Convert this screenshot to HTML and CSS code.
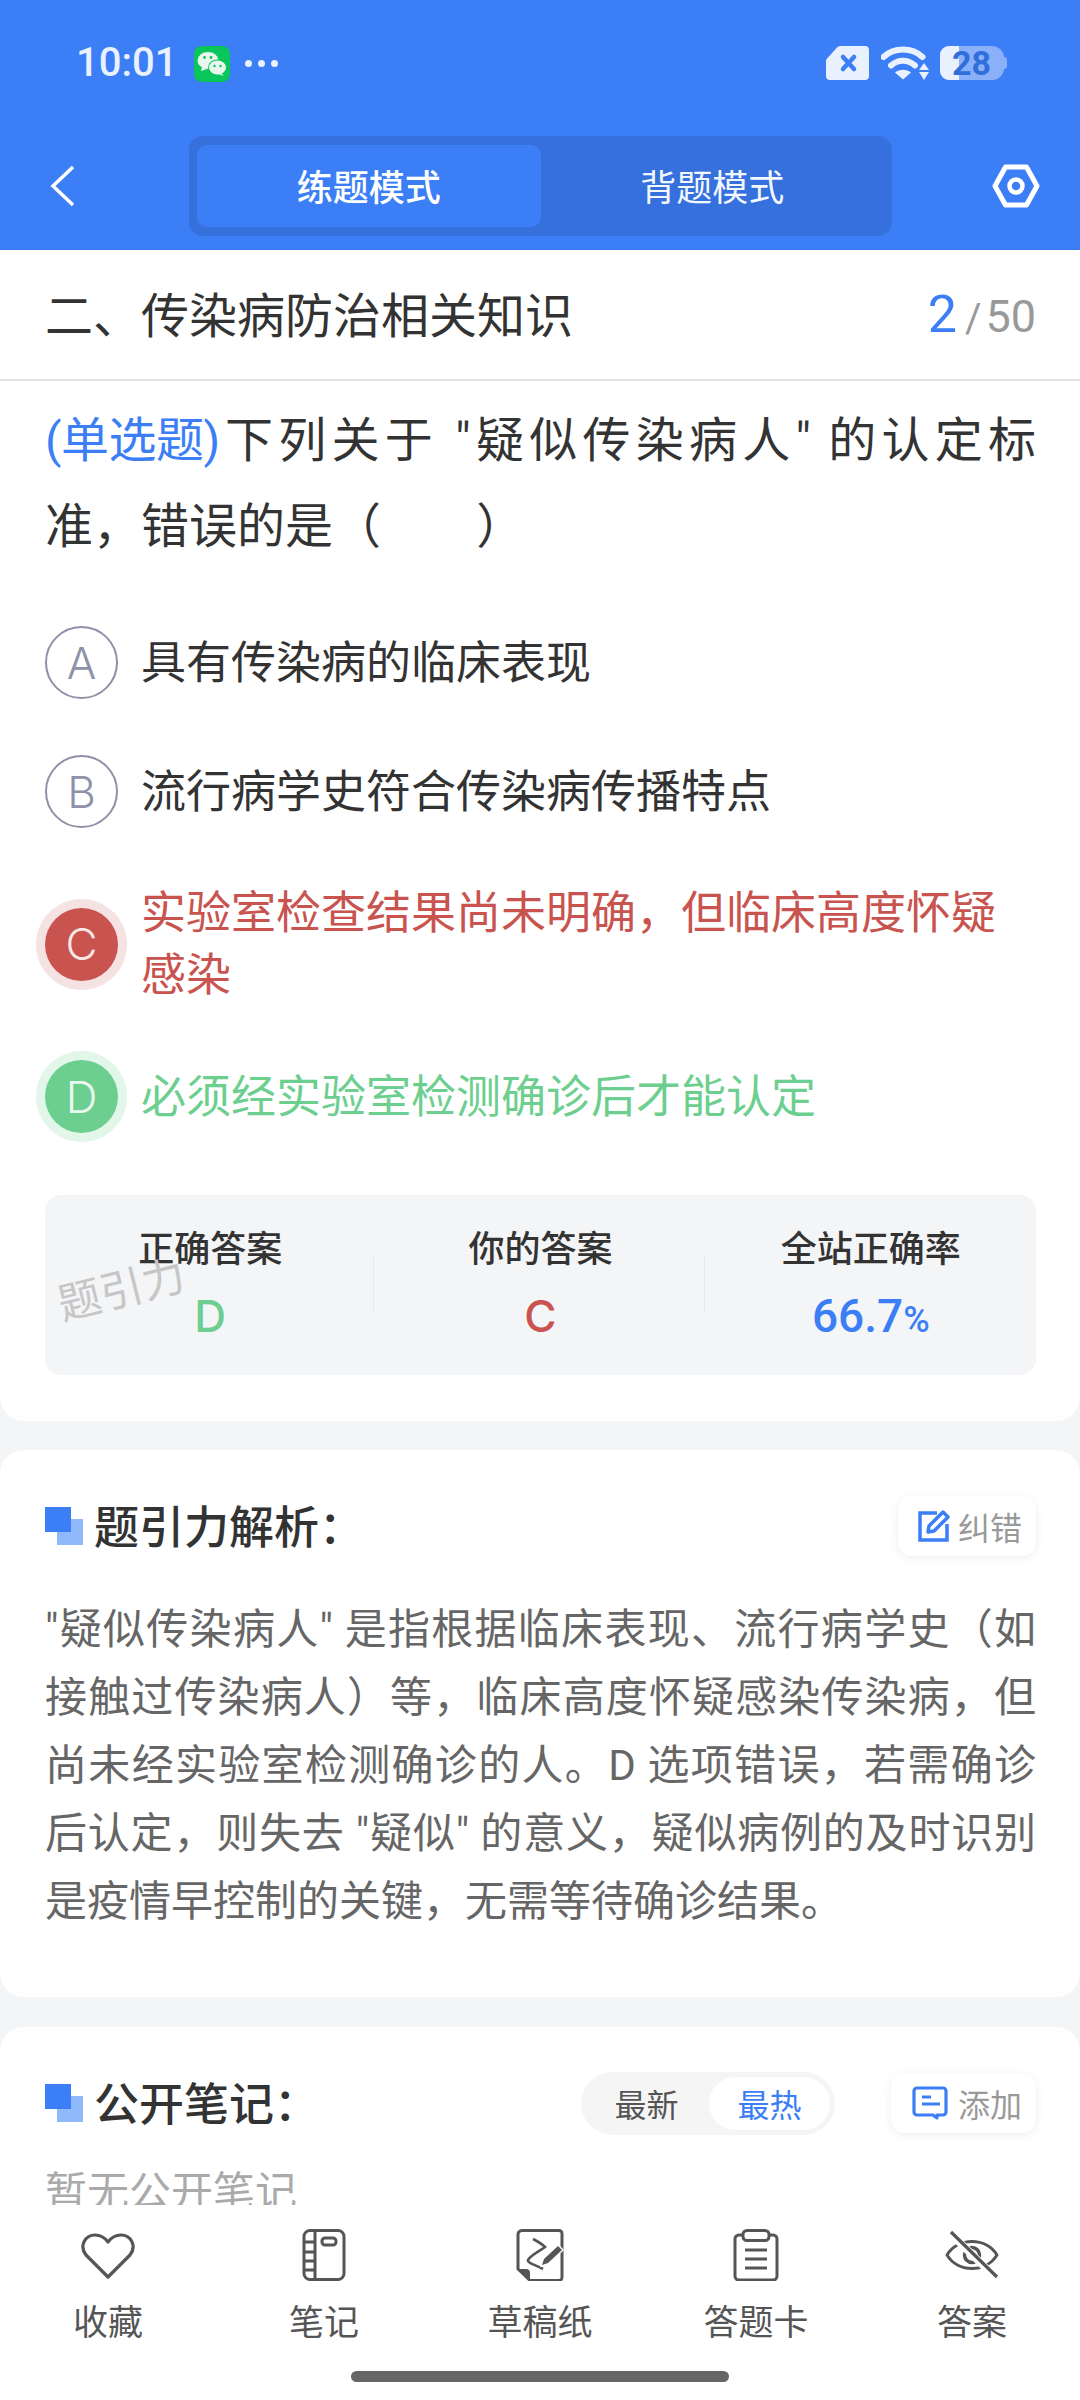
FILE: index.html
```html
<!DOCTYPE html>
<html lang="zh">
<head>
<meta charset="utf-8">
<title>练题模式</title>
<link rel="stylesheet" href="styles.css">
</head>
<body>
<div class="page">
  <header class="top">
    <div class="status">
      <span class="time">10:01</span>
      <svg class="wechat" viewBox="0 0 36 36"><rect width="36" height="36" rx="8" fill="#0ac65a"/><ellipse cx="14" cy="14.500" rx="10.500" ry="8.500" fill="#e9f7ee"/><path d="M8 21l-1 4 6-2z" fill="#e9f7ee"/><ellipse cx="23.500" cy="21.500" rx="9.500" ry="8" fill="#0ac65a"/><ellipse cx="23.500" cy="21.500" rx="8.500" ry="7" fill="#e9f7ee"/><path d="M27 27l3 3-6-2z" fill="#e9f7ee"/><circle cx="10.500" cy="11.500" r="1.400" fill="#0ac65a"/><circle cx="17" cy="11.500" r="1.400" fill="#0ac65a"/><circle cx="20.500" cy="20" r="1.200" fill="#0ac65a"/><circle cx="26.500" cy="20" r="1.200" fill="#0ac65a"/></svg>
      <span class="dots"><i></i><i></i><i></i></span>
      <span class="status-gap"></span>
      <svg class="sim" viewBox="0 0 43 34"><path d="M14 0h25a4 4 0 0 1 4 4v26a4 4 0 0 1-4 4H4a4 4 0 0 1-4-4V15a4 4 0 0 1 1.500-3L11 1.500A4 4 0 0 1 14 0z" fill="#e9f0fe"/><path d="M17 11l11 12M28 11L17 23" stroke="#3b7ef6" stroke-width="4.500" stroke-linecap="round"/></svg>
      <svg class="wifi" viewBox="0 0 48 34"><path d="M2.500 11C13 1 31 1 41.500 11" fill="none" stroke="#e9f0fe" stroke-width="6" stroke-linecap="round"/><path d="M10 19.500C17 13 27 13 34 19.500" fill="none" stroke="#e9f0fe" stroke-width="6" stroke-linecap="round"/><path d="M14 26.500c4.500-3.800 11.500-3.800 16 0l-8 7z" fill="#e9f0fe"/><path d="M43 17l5 7H38zM43 34l-5-8h10z" fill="#e9f0fe"/></svg>
      <span class="battery"><span class="battery-fill"></span><span class="battery-num">28</span><span class="battery-nub"></span></span>
    </div>
    <nav class="modes">
      <div class="back"><svg class="back-icon" viewBox="0 0 26 42"><path d="M23 2L3 21l20 19" fill="none" stroke="#fff" stroke-width="3.500"/></svg></div>
      <div class="tabs">
        <div class="tab tab-on">练题模式</div>
        <div class="tab">背题模式</div>
      </div>
      <div class="setting"><svg class="hex" viewBox="0 0 48 44"><path d="M13.500 3h21L45 22 34.500 41h-21L3 22z" fill="none" stroke="#fff" stroke-width="5" stroke-linejoin="round"/><circle cx="24" cy="22" r="6.500" fill="none" stroke="#fff" stroke-width="4.500"/></svg></div>
    </nav>
  </header>

  <main class="scroll">
    <section class="card card-first">
      <div class="chapter">
        <h1 class="chapter-title">二、传染病防治相关知识</h1>
        <div class="count"><span class="count-now">2</span><span class="count-sep">/</span><span class="count-all">50</span></div>
      </div>
      <p class="question"><span class="qtype">(单选题)</span>下列关于 "疑似传染病人" 的认定标准，错误的是（&nbsp;&nbsp;&nbsp;&nbsp;&nbsp;&nbsp;&nbsp;&nbsp;）</p>
      <div class="options">
        <div class="option"><span class="badge">A</span><span class="opt-text">具有传染病的临床表现</span></div>
        <div class="option"><span class="badge">B</span><span class="opt-text">流行病学史符合传染病传播特点</span></div>
        <div class="option wrong"><span class="badge">C</span><span class="opt-text">实验室检查结果尚未明确，但临床高度怀疑感染</span></div>
        <div class="option right"><span class="badge">D</span><span class="opt-text">必须经实验室检测确诊后才能认定</span></div>
      </div>
      <div class="stats">
        <div class="stat"><div class="stat-name">正确答案</div><div class="stat-val val-right">D</div></div>
        <div class="stat"><div class="stat-name">你的答案</div><div class="stat-val val-wrong">C</div></div>
        <div class="stat"><div class="stat-name">全站正确率</div><div class="stat-val val-rate">66.7<small>%</small></div></div>
        <div class="mark">题引力</div>
      </div>
    </section>

    <section class="card card-analysis">
      <div class="card-head">
        <h2 class="card-title"><span class="squares"></span><span class="title-text">题引力解析：</span></h2>
        <div class="mini-btn"><svg class="mini-icon" viewBox="0 0 34 34"><path d="M20 4H3v27h27V15" fill="none" stroke="#3b7ef6" stroke-width="3.500"/><path d="M12 17L26 3l5 5-14 14-6 1z" fill="none" stroke="#3b7ef6" stroke-width="3.500" stroke-linejoin="round"/></svg><span>纠错</span></div>
      </div>
      <p class="analysis">"疑似传染病人" 是指根据临床表现、流行病学史（如接触过传染病人）等，临床高度怀疑感染传染病，但尚未经实验室检测确诊的人。D 选项错误，若需确诊后认定，则失去 "疑似" 的意义，疑似病例的及时识别是疫情早控制的关键，无需等待确诊结果。</p>
    </section>

    <section class="card card-notes">
      <div class="card-head">
        <h2 class="card-title"><span class="squares"></span><span class="title-text">公开笔记：</span></h2>
        <div class="head-right">
          <div class="segment"><span class="seg">最新</span><span class="seg seg-on">最热</span></div>
          <div class="mini-btn mini-btn-wide"><svg class="mini-icon" viewBox="0 0 36 34"><path d="M5 2h26a3 3 0 0 1 3 3v21a3 3 0 0 1-3 3h-6v3l-4-3H5a3 3 0 0 1-3-3V5a3 3 0 0 1 3-3z" fill="none" stroke="#3b7ef6" stroke-width="3.200" stroke-linejoin="round"/><path d="M10 11h9M10 18h18" stroke="#3b7ef6" stroke-width="3.200"/></svg><span>添加</span></div>
        </div>
      </div>
      <p class="empty">暂无公开笔记</p>
    </section>
  </main>

  <footer class="bottom">
    <div class="tools">
      <div class="tool"><svg class="tool-icon" viewBox="0 0 56 52"><path d="M28 48L6 26C-1 17 5 6 15 6c5.500 0 10 3 13 7 3-4 7.500-7 13-7 10 0 16 11 9 20z" fill="none" stroke="#555" stroke-width="3.200" stroke-linejoin="round"/></svg><span>收藏</span></div>
      <div class="tool"><svg class="tool-icon" viewBox="0 0 56 52"><rect x="8" y="1.500" width="40" height="49" rx="6" fill="none" stroke="#555" stroke-width="3"/><path d="M19 2v48M8 13h11M8 23h11M8 32h11M8 41h11" stroke="#555" stroke-width="3"/><rect x="26" y="9" width="14" height="7" rx="3" fill="none" stroke="#555" stroke-width="3"/></svg><span>笔记</span></div>
      <div class="tool"><svg class="tool-icon" viewBox="0 0 56 52"><path d="M10 1.500h37a3 3 0 0 1 3 3v44a3 3 0 0 1-3 3H18L6 40V5.500a4 4 0 0 1 4-4z" fill="none" stroke="#555" stroke-width="3" stroke-linejoin="round"/><path d="M6 40h8a4 4 0 0 1 4 4v7z" fill="#555"/><path d="M21 10c4 2 9 5 12 8-5 4-14 8-17 13-1 3 8 5 15 9" fill="none" stroke="#555" stroke-width="2.600"/><path d="M46 15l6 6-16 15-8 2 2-8z" fill="#fff"/><path d="M46 17l4 4-14 13-6 2 2-6z" fill="#555"/></svg><span>草稿纸</span></div>
      <div class="tool"><svg class="tool-icon" viewBox="0 0 56 52"><path d="M14 6h-3a4 4 0 0 0-4 4v37a4 4 0 0 0 4 4h34a4 4 0 0 0 4-4V10a4 4 0 0 0-4-4h-3" fill="none" stroke="#555" stroke-width="3"/><rect x="15" y="1.500" width="26" height="10" rx="4" fill="none" stroke="#555" stroke-width="3"/><path d="M17 21h22M17 30h22M17 39h22" stroke="#555" stroke-width="3"/></svg><span>答题卡</span></div>
      <div class="tool"><svg class="tool-icon" viewBox="0 0 56 52"><path d="M3 26C14 8 42 8 53 26 42 44 14 44 3 26z" fill="none" stroke="#555" stroke-width="3" stroke-linejoin="round"/><circle cx="28" cy="26" r="7.500" fill="none" stroke="#555" stroke-width="3.500"/><path d="M5 3l46 45" stroke="#fff" stroke-width="8"/><path d="M7 3l46 45" stroke="#555" stroke-width="3.200"/></svg><span>答案</span></div>
    </div>
    <div class="home-bar"></div>
  </footer>
</div>
</body>
</html>
```

FILE: styles.css
```css
* { box-sizing: border-box; }
html, body { margin: 0; padding: 0; }
body {
  width: 1080px;
  height: 2400px;
  overflow: hidden;
  background: #f4f5f7;
  font-family: Roboto, "Noto Sans CJK SC", sans-serif;
  color: #333;
}
h1, h2, p { margin: 0; }
.page { height: 2400px; display: flex; flex-direction: column; }

.top { background: #3b7ef6; height: 250px; flex: none; }
.status { height: 136px; padding: 46px 76px 0 76px; display: flex; align-items: flex-start; }
.time { font-size: 40px; line-height: 34px; font-weight: 500; color: #e9f0fe; width: 118px; }
.wechat { width: 36px; height: 36px; }
.dots { display: flex; gap: 6px; margin: 14px 0 0 15px; }
.dots i { width: 7px; height: 7px; border-radius: 50%; background: #e9f0fe; }
.status-gap { flex: 1; }
.sim { width: 43px; height: 34px; }
.wifi { width: 48px; height: 34px; margin-left: 12px; }
.battery { position: relative; width: 64px; height: 34px; margin-left: 11px; background: #8bb0fa; border-radius: 9px 12px 12px 9px; }
.battery-fill { position: absolute; left: 0; top: 0; bottom: 0; width: 19px; background: #e9f0fe; border-radius: 9px 0 0 9px; }
.battery-num { position: absolute; left: 12px; top: 0; font-size: 34px; line-height: 34px; font-weight: 700; color: #2f6edb; }
.battery-nub { position: absolute; right: -3px; top: 11px; width: 4px; height: 12px; background: #8bb0fa; border-radius: 0 3px 3px 0; }

.modes { display: flex; align-items: center; height: 100px; }
.back { width: 189px; padding-left: 50px; display: flex; }
.back-icon { width: 26px; height: 42px; }
.tabs { width: 703px; height: 100px; padding: 9px 8px; display: flex; background: #3570dc; border-radius: 14px; }
.tab { flex: 1; display: flex; align-items: center; justify-content: center; padding-bottom: 3px; font-size: 36px; color: #f3f7ff; border-radius: 10px; }
.tab-on { background: #3b7ef6; color: #fff; font-weight: 500; }
.setting { flex: 1; display: flex; justify-content: flex-end; padding-right: 40px; }
.hex { width: 48px; height: 44px; }

.scroll { flex: 1; min-height: 0; overflow: hidden; }
.card { background: #fff; border-radius: 24px; }
.card-first { border-radius: 0 0 24px 24px; height: 1171px; }
.chapter { height: 131px; display: flex; align-items: center; justify-content: space-between; padding: 0 44px 0 45px; border-bottom: 2px solid #e2e2e2; }
.chapter-title { font-size: 48px; font-weight: 400; color: #333; padding-bottom: 6px; }
.count { display: flex; align-items: baseline; }
.count-now { font-size: 52px; color: #3b7ef6; }
.count-sep { font-size: 40px; color: #999; margin: 0 4px 0 8px; }
.count-all { font-size: 45px; color: #999; }

.question { padding: 17px 44px 0 45px; font-size: 48px; line-height: 86px; text-align: justify; color: #333; }
.qtype { display: inline-block; color: #3b7ef6; letter-spacing: -0.5px; }
.options { margin-top: 55px; padding: 0 44px 0 45px; display: flex; flex-direction: column; gap: 54px; }
.option { min-height: 75px; display: flex; align-items: center; gap: 23px; font-size: 45px; line-height: 62px; color: #333; }
.badge { flex: none; width: 73px; height: 73px; border: 2px solid #8e91a8; border-radius: 50%; display: flex; align-items: center; justify-content: center; font-family: Inter, Roboto, sans-serif; font-size: 44px; font-weight: 300; color: #8e91a8; background: #fff; }
.opt-text { flex: 1; padding-top: 2px; }
.wrong { color: #c9534f; margin-top: -2px; }
.wrong .badge { background: #c9534f; border: 0; color: #fbe7e6; box-shadow: 0 0 0 9px #f5e3e3; }
.right { color: #6dcf8f; margin-top: -2px; }
.right .badge { background: #6dcf8f; border: 0; color: #e9f9ef; box-shadow: 0 0 0 9px #e2f6ea; }

.stats { position: relative; margin: 61px 44px 0 45px; height: 180px; display: grid; grid-template-columns: 1fr 1fr 1fr; background: #f4f5f7; border-radius: 16px; }
.stat { position: relative; text-align: center; padding-top: 32px; }
.stat + .stat::before { content: ""; position: absolute; left: -2px; top: 62px; height: 56px; width: 1px; background: #e8e9ec; }
.stat-name { font-size: 36px; line-height: 46px; font-weight: 500; color: #333; }
.stat-val { margin-top: 16px; font-size: 46px; line-height: 54px; font-weight: 500; }
.stat-val small { font-size: 36px; }
.val-right { color: #6dcf8f; font-family: Inter, Roboto, sans-serif; font-size: 44px; }
.val-wrong { color: #c9534f; font-family: Inter, Roboto, sans-serif; font-size: 44px; }
.val-rate { color: #3b7ef6; }
.mark { position: absolute; left: 12px; top: 70px; font-size: 43px; line-height: 50px; color: #c6c6c6; transform: rotate(-14deg); }

.card-analysis { margin-top: 29px; height: 547px; padding: 46px 44px 0 45px; }
.card-notes { margin-top: 30px; padding: 46px 44px 0 45px; height: 300px; }
.card-head { display: flex; align-items: center; justify-content: space-between; height: 60px; }
.card-title { display: flex; align-items: center; font-size: 45px; font-weight: 500; color: #333; }
.title-text { padding-bottom: 3px; }
.squares { position: relative; width: 38px; height: 38px; margin-right: 11px; flex: none; }
.squares::before { content: ""; position: absolute; right: 0; bottom: 0; width: 26px; height: 26px; background: #8fb9fb; }
.squares::after { content: ""; position: absolute; left: 0; top: 0; width: 26px; height: 25px; background: #3b7ef6; }
.mini-btn { display: flex; align-items: center; gap: 7px; height: 60px; padding: 0 14px 0 19px; background: #fff; border-radius: 14px; box-shadow: 0 2px 10px rgba(0,0,0,.07); font-size: 32px; color: #999; }
.mini-btn-wide { gap: 10px; padding-left: 21px; }
.mini-icon { width: 34px; height: 34px; }
.mini-btn-wide .mini-icon { width: 36px; }
.analysis { margin-top: 40px; font-size: 42px; line-height: 68px; color: #666; text-align: justify; }
.head-right { display: flex; align-items: center; gap: 56px; }
.segment { width: 254px; height: 63px; padding: 5px; display: flex; background: #f5f5f5; border-radius: 32px; }
.seg { display: flex; align-items: center; justify-content: center; width: 121px; font-size: 32px; color: #555; border-radius: 27px; }
.seg-on { margin-left: auto; background: #fff; color: #3b7ef6; }
.empty { margin-top: 30px; font-size: 42px; line-height: 60px; color: #aaa; }

.bottom { flex: none; height: 195px; background: #fff; display: flex; flex-direction: column; }
.tools { display: grid; grid-template-columns: repeat(5, 1fr); padding-top: 24px; }
.tool { display: flex; flex-direction: column; align-items: center; gap: 18px; font-size: 35px; line-height: 50px; color: #555; }
.tool-icon { width: 56px; height: 52px; }
.home-bar { width: 378px; height: 11px; margin: 22px auto 0; background: #666; border-radius: 6px; }
```
